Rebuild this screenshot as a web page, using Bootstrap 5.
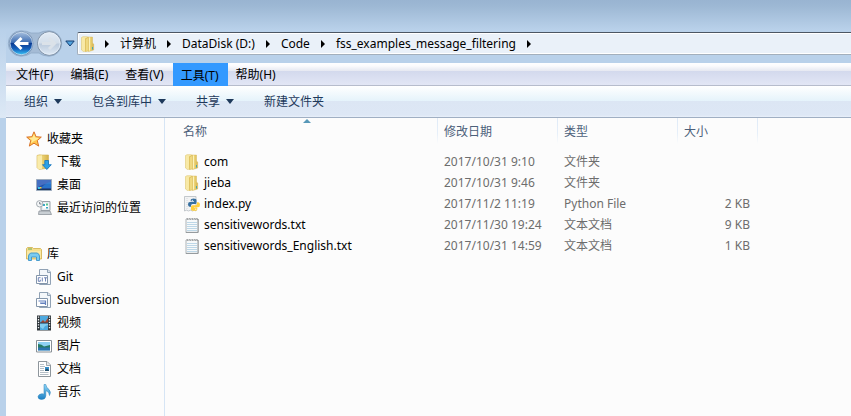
<!DOCTYPE html>
<html lang="zh-CN">
<head>
<meta charset="utf-8">
<meta name="viewport" content="width=device-width, initial-scale=1">
<title>fss_examples_message_filtering</title>
<link href="https://cdn.jsdelivr.net/npm/bootstrap@5.3.0/dist/css/bootstrap.min.css" rel="stylesheet">
<style>
body{font:12px/20px "Noto Sans","Noto Sans CJK SC",sans-serif;color:#000;background:#b9d1ea;overflow:hidden}
a,a:hover{color:inherit;text-decoration:none}
svg{display:block;flex:none}
button{border:0;background:none;padding:0;color:inherit}
.explorer{background:linear-gradient(#dce8f500 30px,#dce8f5 116px) 0 0/6px 118px no-repeat,linear-gradient(#99b4d1 0,#9db8d4 6px,#b9d1ea 30px,#b9d1ea 100%)}
.frame-body{margin-left:6px}
.topbar{padding:32px 0 8px 7px}
.navpair{width:56px;height:23px}
.navpair svg{margin-top:-2px}
.hist{width:14px}
.addressbar{height:23px;background:#eaf1f9;border:1px solid #a3afbc;border-top-color:#4c5663;border-right:0;border-radius:2px 0 0 2px;box-shadow:inset 1px 1px #fff,inset 0 -1px #fff;padding-left:2px}
.crumbs{gap:11px;margin-left:9px}
.menubar{height:23px;background:linear-gradient(#fff 0,#fbfbfd 3px,#e5e8f1 8px,#d3d9ed 8px,#e2e6f5 22px);border-bottom:1px solid #b6bccc;padding-left:2px}
.menubar button{padding:2px 9px 0 8px;height:22px}
.menubar .chosen{background:#3399ff;height:23px}
.cmdbar{height:32px;background:linear-gradient(#fff 0,#e5f3fb 15px,#dce6f4 15px,#dde7f5 29px,#e8f0fa 31px);border-bottom:1px solid #a0afc3;color:#1e395b;padding-left:18px;gap:30px}
.cmdbar .drop{gap:6px}
.panes{background:#fcfcfc}
.side{width:159px;border-right:1px solid #d6e5f5;padding-top:10px}
.side li{height:23px;padding-top:1px}
.side .group{padding-left:20px;gap:5px}
.side .leaf{padding-left:30px;gap:5px}
.side ul+ul{margin-top:23px!important}
.files{table-layout:fixed;width:100%}
.files th{font-weight:400;color:#4c607a;height:26px;padding:2px 6px 0;background:linear-gradient(#dfeaf7,#e6eff9 60%,#fcfcfc) right top/1px 26px no-repeat}
.files th:last-child{background:none}
.files td{height:21px;padding:0 6px;color:#6d6d6d;white-space:nowrap}
.files th:first-child,.files td:first-child{padding-left:18px}
.files td:first-child{color:#000}
.files tbody::before{content:"";display:block;height:7px}
.files td:nth-child(4){text-align:right;padding-right:8px}
.fname{gap:4px;padding-left:1px}
.c-name{width:273px}.c-date,.c-type{width:120px}.c-size{width:80px}
.sorter{left:138px;top:1px}
</style>
<script src="https://cdn.jsdelivr.net/npm/bootstrap@5.3.0/dist/js/bootstrap.bundle.min.js"></script>
</head>
<body>
<svg width="0" height="0" class="position-absolute" aria-hidden="true">
<defs>
<linearGradient id="gold"><stop offset="0" stop-color="#f8e7a0"/><stop offset=".4" stop-color="#eed678"/><stop offset="1" stop-color="#d3b04a"/></linearGradient>
<linearGradient id="sky" x2="0" y2="1"><stop offset="0" stop-color="#8fd7f7"/><stop offset="1" stop-color="#1b7fc4"/></linearGradient>
<linearGradient id="blueball" x2="0" y2="1"><stop offset="0" stop-color="#a5bedd"/><stop offset=".45" stop-color="#3f6fb4"/><stop offset=".5" stop-color="#0b3c93"/><stop offset=".75" stop-color="#1663bd"/><stop offset="1" stop-color="#38c2f5"/></linearGradient>
<linearGradient id="greyball" x2="0" y2="1"><stop offset="0" stop-color="#e4ecf5"/><stop offset=".48" stop-color="#d3deea"/><stop offset=".52" stop-color="#bccbdd"/><stop offset="1" stop-color="#dfeaf5"/></linearGradient>
<symbol id="folder" viewBox="0 0 16 16"><path d="M1.500 1.500 3 .7h4.500v14L3.500 15.500 1.500 14z" fill="#f8e9a6" stroke="#dfc773" stroke-width=".6"/><path d="M5 2.500 8 1v14l-3 .6z" fill="#e3c561"/><path d="M8 1h4.500v6l1.200 1v6L9 15.400H8z" fill="url(#gold)" stroke="#d5b450" stroke-width=".4"/><path d="M5.500 3 8.500 1.300v13.500l-3 .7z" fill="#efd981" stroke="#d5b450" stroke-width=".4"/><path d="M9.500 1.500v13" stroke="#fbf2bd"/><path d="M12.500 11v2.500" stroke="#43a7b0"/></symbol>
<symbol id="notepad" viewBox="0 0 16 16"><path d="M2 2h12v13.300H2z" fill="#f7f9fa" stroke="#a5abb0" stroke-width=".9"/><path d="M14.200 2v13.500H1.800" fill="none" stroke="#85898c" stroke-width=".7"/><path d="M3 1l1 2M5.500 1l1 2M8 1l1 2M10.500 1l1 2M12.700 1l.8 2" stroke="#888" stroke-width=".8"/><path d="M3 5.500h10M3 7.500h10M3 9.500h10M3 11.500h10M3 13.500h10" stroke="#b6d2e4" stroke-width=".9"/></symbol>
<symbol id="code-page" viewBox="0 0 16 16"><path d="M3.500.5h8.500l2.500 2.500v12.500h-11z" fill="#f4f7fa" stroke="#91a2b5"/><path d="M11.500 1v2.500h3" fill="#dbe5ef" stroke="#91a2b5"/><path d="M.5 6.500h11v8H.5z" fill="#fff" stroke="#8496ab"/></symbol>
</defs>
</svg>
<div class="explorer d-flex flex-column min-vh-100">
<header class="topbar d-flex">
  <div class="navpair">
    <svg width="56" height="28" viewBox="0 0 56 28" role="img" aria-label="后退 前进"><path d="M14 .8Q20 .8 24 3h8Q36 .8 42 .8A12.700 12.700 0 0 1 42 26.200Q36 26.200 32 23h-8Q20 26.200 14 26.200A12.700 12.700 0 0 1 14 .8z" fill="#a4bbd5" stroke="#8fa9c6" stroke-width=".8"/><circle cx="14.300" cy="13.500" r="12" fill="#6783a8"/><circle cx="14.300" cy="13.500" r="11.200" fill="url(#blueball)" stroke="#dbe9f6" stroke-width=".7"/><path d="M14.500 8 9 13.500 14.500 19M9.500 13.500H21.500" fill="none" stroke="#fff" stroke-width="3"/><circle cx="42.300" cy="13.500" r="11.800" fill="url(#greyball)" stroke="#7f91a6"/><circle cx="42.300" cy="13.500" r="10.800" fill="none" stroke="#e8f1fa" stroke-width=".7"/><path d="M42 8 47.500 13.500 42 19M47 13.500H35" fill="none" stroke="#dbe2e9" stroke-width="3"/></svg>
  </div>
  <button class="hist d-flex align-items-center justify-content-center" aria-label="历史记录"><svg width="10" height="7" viewBox="0 0 10 7"><path d="M.8 1h8.400L5 6z" fill="#51a4df" stroke="#173f73" stroke-linejoin="round"/></svg></button>
  <nav class="addressbar d-flex align-items-center flex-grow-1" aria-label="地址">
    <svg width="16" height="16"><use href="#folder"/></svg>
    <div class="crumbs d-flex align-items-center">
      <svg width="4" height="8"><path d="M0 0 4 4 0 8z"/></svg>
      <a href="#">计算机</a><svg width="4" height="8"><path d="M0 0 4 4 0 8z"/></svg>
      <a href="#">DataDisk (D:)</a><svg width="4" height="8"><path d="M0 0 4 4 0 8z"/></svg>
      <a href="#">Code</a><svg width="4" height="8"><path d="M0 0 4 4 0 8z"/></svg>
      <a href="#">fss_examples_message_filtering</a><svg width="4" height="8"><path d="M0 0 4 4 0 8z"/></svg>
    </div>
  </nav>
</header>
<div class="frame-body d-flex flex-column flex-grow-1">
<div class="menubar d-flex">
  <button>文件(F)</button><button>编辑(E)</button><button>查看(V)</button><button class="chosen">工具(T)</button><button>帮助(H)</button>
</div>
<div class="cmdbar d-flex align-items-center">
  <button class="drop d-flex align-items-center">组织<svg width="8" height="5"><path d="M0 0h8L4 5z" fill="#1e395b"/></svg></button>
  <button class="drop d-flex align-items-center">包含到库中<svg width="8" height="5"><path d="M0 0h8L4 5z" fill="#1e395b"/></svg></button>
  <button class="drop d-flex align-items-center">共享<svg width="8" height="5"><path d="M0 0h8L4 5z" fill="#1e395b"/></svg></button>
  <button>新建文件夹</button>
</div>
<div class="panes d-flex flex-grow-1">
<nav class="side flex-shrink-0" aria-label="导航窗格">
  <ul class="list-unstyled m-0">
    <li><a href="#" class="group d-flex align-items-center"><svg width="16" height="16" viewBox="0 0 16 16"><path d="M8 .8l2.100 4.900 5.200.4-4 3.500 1.400 5.500L8 12.200l-4.700 2.900 1.400-5.500-4-3.500 5.200-.4z" fill="#ffc64d" stroke="#d66a1f" stroke-width=".9" stroke-linejoin="round"/><path d="M8 3l1.300 3.500 3.700.4-3 2.300L8 10l-3 2.500.8-3.400L3 6.900l3.500-.4z" fill="#ffeb96"/></svg>收藏夹</a></li>
    <li><a href="#" class="leaf d-flex align-items-center"><svg width="16" height="16" viewBox="0 0 16 16"><path d="M1 1.500Q3 .5 6 1h6.500v13L3 15.500 1 13.500z" fill="url(#gold)" stroke="#d0ae4d" stroke-width=".6"/><path d="M1.500 1.800 6 1.200v13.500L3 15.500 1.500 13.500z" fill="#f9ebab"/><path d="M8.800 6.500h3.700v4.200h2.800L10.800 15.500 6.500 10.700h2.300z" fill="#2ca1e8" stroke="#1474bd" stroke-width=".8"/></svg>下载</a></li>
    <li><a href="#" class="leaf d-flex align-items-center"><svg width="16" height="16" viewBox="0 0 16 16"><path d="M.5 2.500h15v11H.5z" fill="#2451aa" stroke="#9cabbc"/><path d="M1 3h14v4Q8 6 1 11z" fill="#466fc1"/><path d="M6 10Q11 5 15 5v6H6z" fill="#2d8cdd" opacity=".6"/><path d="M1 11.800h14V13H1z" fill="#1b365b"/><path d="M2 10h2v2H2z" fill="#44c8ed"/><path d="M4 10h1.500v1.500H4z" fill="#f4cf39"/></svg>桌面</a></li>
    <li><a href="#" class="leaf d-flex align-items-center"><svg width="16" height="16" viewBox="0 0 16 16"><path d="M5 1.500h9v9H5z" fill="#e7edf1" stroke="#9aa2a9"/><path d="M7 3.500h5.500v5H7z" fill="#fff"/><path d="M7 4h2v2H7zM10 7h2v1.500h-2z" fill="#37a9c5"/><path d="M10 3.500h2v2h-2z" fill="#5ec589"/><path d="M3 11h11l1.500 3.500h-13z" fill="#c9cfd4" stroke="#8f969c" stroke-width=".8"/><circle cx="3.700" cy="3.800" r="3.200" fill="#f5f7f8" stroke="#9ba3a9" stroke-width=".9"/><path d="M3.700 2v2h1.800" fill="none" stroke="#5c6670" stroke-width=".8"/></svg>最近访问的位置</a></li>
  </ul>
  <ul class="list-unstyled m-0">
    <li><a href="#" class="group d-flex align-items-center"><svg width="16" height="16" viewBox="0 0 16 16"><path d="M.5 2.500 1.500 1.500h5l1 1h7l1 1v9.500H.5z" fill="#f5df8d" stroke="#d1af4a" stroke-width=".8"/><path d="M2 3h4" stroke="#6eab58"/><path d="M1 5h14v7H1z" fill="#f9e8a5"/><path d="M2.500 14.500V10Q3 7.300 5 7h6q2 .3 2.500 3v4.500h-3V11h-5v3.500z" fill="#7acbf1" stroke="#3c94c8" stroke-width=".9"/></svg>库</a></li>
    <li><a href="#" class="leaf d-flex align-items-center"><svg width="16" height="16" viewBox="0 0 16 16"><use href="#code-page"/><path d="M4.500 8.700H2.300v3.600h2v-1.600M6.300 8.500v4M8 8.800h3M9.500 8.800v3.700" fill="none" stroke="#6177ae" stroke-width=".9"/></svg>Git</a></li>
    <li><a href="#" class="leaf d-flex align-items-center"><svg width="16" height="16" viewBox="0 0 16 16"><use href="#code-page"/><path d="M2.500 9h7v2.500h-5M4 11h5.500v2" fill="none" stroke="#6380bd" stroke-width="1.200"/></svg>Subversion</a></li>
    <li><a href="#" class="leaf d-flex align-items-center"><svg width="16" height="16" viewBox="0 0 16 16"><path d="M1 .5h14v15H1z" fill="#30373c"/><path d="M4 1h8v14H4z" fill="#4ea9df"/><path d="M4 8 7 5l2 2 3-4v5z" fill="#a4422c"/><path d="M4 8.500h8V10L9 11l-2 3-3-2z" fill="#84cef1"/><path d="M4 8h8" stroke="#294860"/><path d="M2.500 1.500v13M13.500 1.500v13" stroke="#f3f5f6" stroke-width="1.300" stroke-dasharray="1.300 1.300"/></svg>视频</a></li>
    <li><a href="#" class="leaf d-flex align-items-center"><svg width="16" height="16" viewBox="0 0 16 16"><path d="M.5 2.500h15v11.500H.5z" fill="#fff" stroke="#899096"/><path d="M2 4h12v8.500H2z" fill="#8fd1f3"/><path d="M2 6q4 0 6 2.500L14 7v3H2z" fill="#277b64"/><path d="M2 9.500h12v3H2z" fill="#2d75ae"/></svg>图片</a></li>
    <li><a href="#" class="leaf d-flex align-items-center"><svg width="16" height="16" viewBox="0 0 16 16"><path d="M2.500.5h8.500l3.500 3.500v11.500h-12z" fill="#fff" stroke="#8e969c"/><path d="M10.500 1v3.500h4" fill="#e3e8ec" stroke="#8e969c" stroke-width=".8"/><path d="M4 3.500h4M4 5.500h5M4 7.500h4M4 9.500h4M4 11.500h8.500M4 13.500h8.500" stroke="#a2aeb9" stroke-width=".8"/><path d="M9 6h4v4H9z" fill="#378fca"/><path d="M9 9l2-1.500L13 9v1H9z" fill="#23506d"/></svg>文档</a></li>
    <li><a href="#" class="leaf d-flex align-items-center"><svg width="16" height="16" viewBox="0 0 16 16"><path d="M8 .5h1.800Q10 3.500 13 5.500q2.500 2.500.5 6Q13.500 8 9.800 6.500V12Q9.500 15.500 5.500 15.500 2 15.300 2 12.700 2.500 10 6 9.700q1.200 0 2 .5z" fill="url(#sky)" stroke="#277fb9" stroke-width=".5"/></svg>音乐</a></li>
  </ul>
</nav>
<main class="flex-grow-1 position-relative">
  <svg class="sorter position-absolute" width="8" height="4"><path d="M4 0l4 4H0z" fill="#5798b8"/></svg>
  <table class="files">
    <colgroup><col class="c-name"><col class="c-date"><col class="c-type"><col class="c-size"><col></colgroup>
    <thead><tr><th scope="col">名称</th><th scope="col">修改日期</th><th scope="col">类型</th><th scope="col">大小</th><th></th></tr></thead>
    <tbody>
      <tr><td><div class="fname d-flex align-items-center"><svg width="16" height="16"><use href="#folder"/></svg>com</div></td><td>2017/10/31 9:10</td><td>文件夹</td><td></td><td></td></tr>
      <tr><td><div class="fname d-flex align-items-center"><svg width="16" height="16"><use href="#folder"/></svg>jieba</div></td><td>2017/10/31 9:46</td><td>文件夹</td><td></td><td></td></tr>
      <tr><td><div class="fname d-flex align-items-center"><svg width="16" height="16" viewBox="0 0 16 16"><path d="M.5.500h11.500v14.500l-1.500-.8-2 .8-2-.8-2 .8-2-.8-2 .8z" fill="#f2f3f4" stroke="#b5bbc0" stroke-width=".8"/><path d="M3 2v11" stroke="#d4d8db" stroke-dasharray="1 1"/><path d="M7.500 3q2-.8 4.200 0 .8.500.8 1.300v2.500q0 1.200-1.200 1.200H8.500Q7 8 7 9.800v.9H5.500Q4 10.500 4 8.300 4 6 6 6h4v-.7H6.700V4q0-.7.8-1z" fill="#366f9f"/><path d="M13 6.300h1.300Q16 6.500 16 8.700q0 2.500-1.900 2.500h-4v.6h3.200v1.400q0 1.500-3 1.500-3.300 0-3.300-1.500v-2.400q0-1.500 1.500-1.500h3Q13 9 13 7.500z" fill="#ffcf3d"/><circle cx="8.300" cy="4.300" r=".6" fill="#fff"/><circle cx="11.800" cy="13.200" r=".6" fill="#fff"/></svg>index.py</div></td><td>2017/11/2 11:19</td><td>Python File</td><td>2 KB</td><td></td></tr>
      <tr><td><div class="fname d-flex align-items-center"><svg width="16" height="16"><use href="#notepad"/></svg>sensitivewords.txt</div></td><td>2017/11/30 19:24</td><td>文本文档</td><td>9 KB</td><td></td></tr>
      <tr><td><div class="fname d-flex align-items-center"><svg width="16" height="16"><use href="#notepad"/></svg>sensitivewords_English.txt</div></td><td>2017/10/31 14:59</td><td>文本文档</td><td>1 KB</td><td></td></tr>
    </tbody>
  </table>
</main>
</div>
</div>
</div>
</body>
</html>
